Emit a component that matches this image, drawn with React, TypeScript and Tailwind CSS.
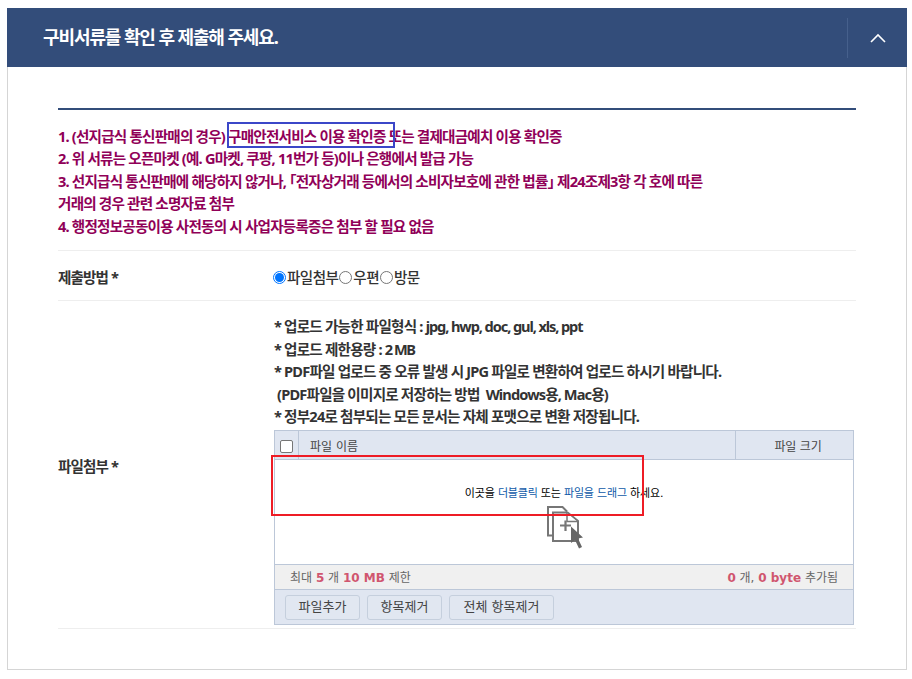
const font = "font-['Noto_Sans','Noto_Sans_CJK_KR',sans-serif]";

function Radio({ checked }: { checked?: boolean }) {
  return (
    <span className={`inline-flex h-[13px] w-[13px] shrink-0 items-center justify-center rounded-full border ${checked ? 'border-[#0075ff]' : 'border-[#767676]'} bg-white`}>
      {checked && <span className="h-[9px] w-[9px] rounded-full bg-[#0075ff]" />}
    </span>
  );
}

function Btn({ w, children }: { w: string; children: string }) {
  return (
    <button className={`${w} h-[25px] rounded-[3px] border border-[#c5cfdd] bg-[#e1e7f1] text-[13px] text-[#444]`}>
      {children}
    </button>
  );
}

function DropIcon() {
  return (
    <svg width="38" height="44" viewBox="0 0 38 44" className="block">
      <path d="M7 30.5H2V2H16.5L21 6.5" fill="none" stroke="#767676" strokeWidth="2" />
      <path d="M7 7.5H21.5L32 16V36H7Z" fill="#fff" stroke="#767676" strokeWidth="2" />
      <path d="M21 8V16.5H31" fill="#fff" stroke="#767676" strokeWidth="1.5" />
      <path d="M14 20.5H25M19.5 15.5V26" fill="none" stroke="#767676" strokeWidth="2.2" />
      <path d="M25 21.5L37 32.5L32 33.5L36 42L33 43.5L29 35L25 38Z" fill="#666" />
    </svg>
  );
}

export default function App() {
  return (
    <div className={`${font} relative h-[679px] w-[912px] overflow-hidden bg-white px-[7px] pt-[8px]`}>
      <header className="flex h-[59px] w-[900px] items-center justify-between bg-[#334d7a] pl-[36px]">
        <h1 className="text-[18px] font-bold tracking-[-1.1px] text-white">구비서류를 확인 후 제출해 주세요.</h1>
        <div className="flex h-[40px] w-[60px] items-center justify-center border-l border-[#46608c]">
          <svg width="16" height="10" viewBox="0 0 16 10"><path d="M1 9L8 2L15 9" fill="none" stroke="#fff" strokeWidth="1.6" /></svg>
        </div>
      </header>
      <main className="h-[603px] w-[900px] border border-t-0 border-[#d5d5d5] pl-[50px] pr-[50px] pt-[41px]">
        <div className="border-t-2 border-[#334d7a]">
          <div className="h-[141px] border-b border-[#eeeeee] pt-[15px] text-[14.6px] font-bold leading-[22.4px] tracking-[-0.8px] text-[#900058]">
            <p>1. (선지급식 통신판매의 경우) 구매안전서비스 이용 확인증 또는 결제대금예치 이용 확인증</p>
            <p>2. 위 서류는 오픈마켓 (예. G마켓, 쿠팡, 11번가 등)이나 은행에서 발급 가능</p>
            <p>3. 선지급식 통신판매에 해당하지 않거나, ｢전자상거래 등에서의 소비자보호에 관한 법률｣ 제24조제3항 각 호에 따른</p>
            <p>거래의 경우 관련 소명자료 첨부</p>
            <p>4. 행정정보공동이용 사전동의 시 사업자등록증은 첨부 할 필요 없음</p>
          </div>
          <div className="flex h-[50px] items-center border-b border-[#eeeeee] pt-[4px] text-[14.6px] font-bold tracking-[-0.9px] text-[#333]">
            <div className="w-[215px]">제출방법 *</div>
            <div className="flex items-center tracking-[-0.6px]">
              <Radio checked /><span className="ml-[1px] mr-[1px] font-medium">파일첨부</span>
              <Radio /><span className="ml-[1px] mr-[1px] font-medium">우편</span>
              <Radio /><span className="ml-[1px] font-medium">방문</span>
            </div>
          </div>
          <div className="flex h-[328px] items-center border-b border-[#eeeeee]">
            <div className="w-[216px] pt-[4px] text-[14.6px] font-bold tracking-[-0.9px] text-[#333]">파일첨부 *</div>
            <div className="flex h-full w-[582px] flex-col">
              <div className="h-[129px] pt-[14px] text-[14.6px] font-bold leading-[22.5px] tracking-[-0.8px] text-[#333]">
                <p>* 업로드 가능한 파일형식 : <span className="tracking-[-1.1px]">jpg, hwp, doc, gul, xls, ppt</span></p>
                <p>* 업로드 제한용량 : <span className="tracking-[-1.5px]">2 MB</span></p>
                <p>* PDF파일 업로드 중 오류 발생 시 JPG 파일로 변환하여 업로드 하시기 바랍니다.</p>
                <p>&nbsp;(PDF파일을 이미지로 저장하는 방법 &nbsp;<span className="tracking-[-0.9px]">Windows용, Mac용)</span></p>
                <p>* 정부24로 첨부되는 모든 문서는 자체 포맷으로 변환 저장됩니다.</p>
              </div>
              <div className="w-[580px] border border-[#bcc7d8] font-['DejaVu_Sans','Noto_Sans_CJK_KR',sans-serif]">
                <div className="flex h-[29px] items-stretch border-b border-[#bcc7d8] bg-[#e0e6f1] text-[12px] text-[#444]">
                  <div className="flex w-[24px] items-center justify-center border-r border-[#bcc7d8] pt-[3px] pr-[1px]">
                    <span className="block h-[13px] w-[13px] rounded-[2px] border border-[#767676] bg-white" />
                  </div>
                  <div className="flex flex-1 items-center pl-[11px] pt-[3px]">파일 이름</div>
                  <div className="flex w-[118px] items-center justify-center border-l border-[#bcc7d8] pl-[7px] pt-[3px] tracking-[-0.2px]">파일 크기</div>
                </div>
                <div className="flex h-[104px] flex-col items-center bg-white pt-[25px] text-[11px] tracking-[-0.2px] text-black">
                  <p className="h-[17px] leading-[17px]">이곳을 <span className="text-[#0f5aa8]">더블클릭</span> 또는 <span className="text-[#0f5aa8]">파일을 드래그</span> 하세요.</p>
                  <div className="ml-[1px] mt-[3px]"><DropIcon /></div>
                </div>
                <div className="flex h-[26px] items-center justify-between border-y border-[#bcc7d8] bg-[#f0f0f0] px-[15px] pt-[1px] text-[12px] text-[#666]">
                  <span>최대 <b className="text-[#d0566f]">5</b> 개 <b className="text-[#d0566f]">10 MB</b> 제한</span>
                  <span><b className="text-[#d0566f]">0</b> 개, <b className="text-[#d0566f]">0 byte</b> 추가됨</span>
                </div>
                <div className="flex h-[34px] items-center gap-[7px] bg-[#e0e6f1] pl-[10px]">
                  <Btn w="w-[75px]">파일추가</Btn>
                  <Btn w="w-[75px]">항목제거</Btn>
                  <Btn w="w-[105px]">전체 항목제거</Btn>
                </div>
              </div>
            </div>
          </div>
        </div>
      </main>
      <div className="absolute left-[227px] top-[122px] h-[26px] w-[168px] border-2 border-[#3b47c8]" />
      <div className="absolute left-[271px] top-[455px] h-[61px] w-[373px] border-2 border-[#ee1c25]" />
    </div>
  );
}
